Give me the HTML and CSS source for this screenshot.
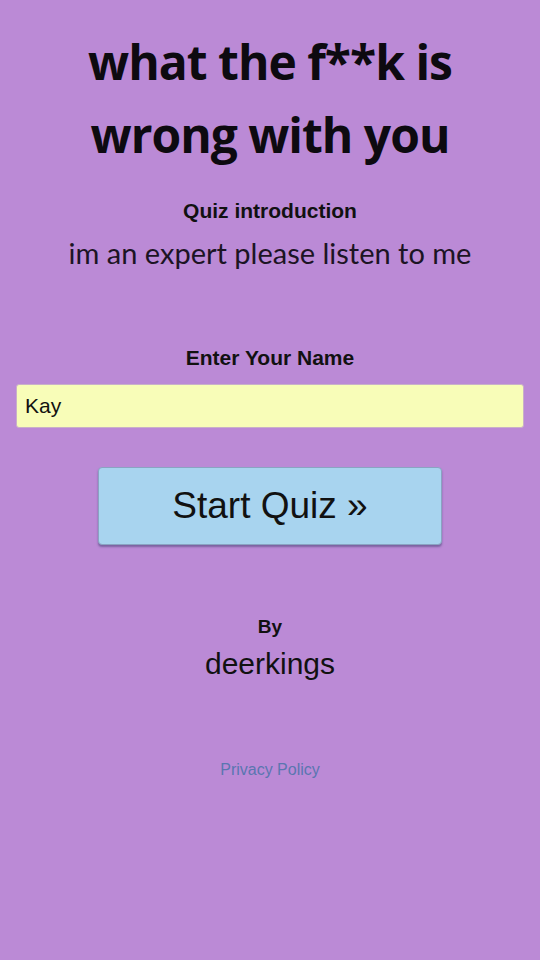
FILE: index.html
```html
<!DOCTYPE html>
<html lang="en">
<head>
    <meta charset="UTF-8">
    <meta name="viewport" content="width=device-width, initial-scale=1.0">
    <title>what the f**k is wrong with you</title>
    <link rel="stylesheet" href="styles.css">
</head>
<body>
    <div class="quiz">
        <h1 class="title">what the f**k is wrong with you</h1>
        <div class="intro">
            <h3>Quiz introduction</h3>
            <p>im an expert please listen to me</p>
        </div>
        <div class="name-form">
            <label for="name">Enter Your Name</label>
            <input type="text" id="name" value="Kay">
            <button class="start">Start Quiz &raquo;</button>
        </div>
        <div class="author">
            <h4>By</h4>
            <p>deerkings</p>
        </div>
        <div class="footer">
            <a href="#">Privacy Policy</a>
        </div>
    </div>
</body>
</html>
```

FILE: styles.css
```css
body {
    margin: 0;
    background-color: #bb8ad6;
    font-family: "Liberation Sans", Arial, sans-serif;
    color: #111;
    min-height: 960px;
}
.quiz {
    display: flex;
    flex-direction: column;
    align-items: center;
    padding: 0 16px;
    text-align: center;
}
.title {
    font-family: "Open Sans", sans-serif;
    font-weight: 700;
    font-size: 48px;
    line-height: 73px;
    letter-spacing: -1px;
    margin: 25px 40px 0;
    color: #0d0a10;
}
.intro h3 {
    font-size: 21px;
    line-height: 24px;
    margin: 28px 0 0;
}
.intro p {
    font-family: Lato, sans-serif;
    font-size: 29px;
    line-height: 35px;
    margin: 12px 0 0;
    color: #1c1424;
}
.name-form {
    display: flex;
    flex-direction: column;
    align-items: center;
    width: 100%;
    margin-top: 76px;
}
.name-form label {
    font-weight: bold;
    font-size: 21px;
    line-height: 24px;
}
.name-form input {
    box-sizing: border-box;
    width: 100%;
    height: 44px;
    margin-top: 14px;
    padding: 0 8px;
    font-family: "Liberation Sans", Arial, sans-serif;
    font-size: 21px;
    color: #111;
    background-color: #f8fdb8;
    border: 1px solid #c9b0c8;
    border-radius: 3px;
}
.start {
    width: 344px;
    height: 78px;
    margin-top: 39px;
    font-family: "Liberation Sans", Arial, sans-serif;
    font-size: 37px;
    color: #111;
    background-color: #a8d4ef;
    border: 1px solid #8aa3c2;
    border-radius: 4px;
    box-shadow: 0 2px 2px rgba(60, 60, 110, 0.5);
}
.author {
    margin-top: 71px;
}
.author h4 {
    font-size: 19px;
    line-height: 22px;
    margin: 0;
}
.author p {
    font-size: 30px;
    line-height: 34px;
    margin: 9px 0 0;
}
.footer {
    margin-top: 80px;
}
.footer a {
    font-size: 16px;
    line-height: 18px;
    color: #5a76b0;
    text-decoration: none;
}
```
